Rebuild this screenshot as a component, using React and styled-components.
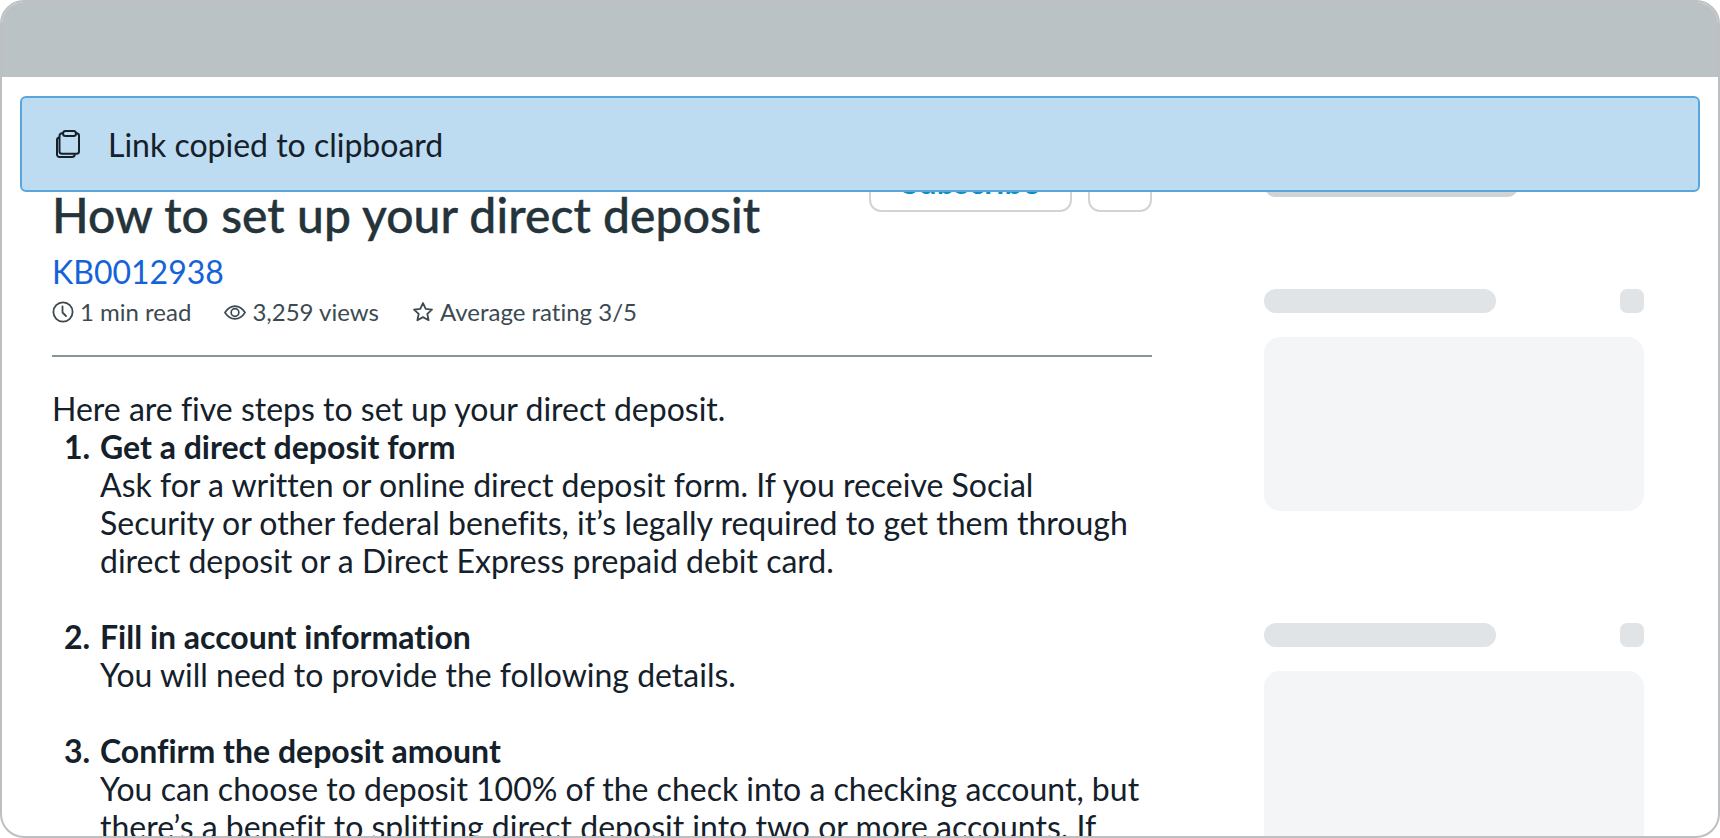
import styled, { createGlobalStyle } from "styled-components";

const GlobalStyle = createGlobalStyle`
  html, body {
    margin: 0;
    padding: 0;
    background: #fff;
  }
  * {
    box-sizing: border-box;
  }
  body {
    font-family: Lato, "Open Sans", sans-serif;
    font-variant-ligatures: none;
  }
`;

const CopyIcon = () => (
  <svg width="24" height="28" viewBox="0 0 24 28" fill="none" stroke="#14202a" strokeWidth="2" strokeLinejoin="round">
    <path d="M7 3.2H6a2.500 2.500 0 0 0-2.500 2.500v15.600a2.500 2.500 0 0 0 2.500 2.500h14.500a2.500 2.500 0 0 0 2.500-2.500V5.700a2.500 2.500 0 0 0-2.500-2.500H20" />
    <rect x="7" y="1" width="13" height="5" rx="2.500" />
    <path d="M3.500 7.500a2.500 2.500 0 0 0-2.500 2.500v14.500a2.500 2.500 0 0 0 2.500 2.500H16a2.800 2.800 0 0 0 2.800-2.800" />
  </svg>
);

const ClockIcon = () => (
  <svg width="22" height="22" viewBox="0 0 22 22" fill="none" stroke="#3b4a52" strokeWidth="1.800" strokeLinecap="round" strokeLinejoin="round">
    <circle cx="11" cy="11" r="9.600" />
    <path d="M10.500 5.500v6l3.500 3.500" />
  </svg>
);

const EyeIcon = () => (
  <svg width="22" height="17" viewBox="0 0 24 18" fill="none" stroke="#3b4a52" strokeWidth="1.800" strokeLinejoin="round">
    <path d="M1 9c3-4.600 6.800-7 11-7s8 2.400 11 7c-3 4.600-6.800 7-11 7S4 13.600 1 9z" />
    <circle cx="12" cy="9" r="4.200" />
  </svg>
);

const StarIcon = () => (
  <svg width="22" height="22" viewBox="0 0 22 22" fill="none" stroke="#3b4a52" strokeWidth="1.800" strokeLinejoin="round">
    <path d="M11 2l2.700 5.900 6.300.7-4.700 4.300 1.300 6.300L11 16.100l-5.600 3.100 1.300-6.300L2 8.600l6.300-.7z" />
  </svg>
);

const Frame = styled.div`
  position: relative;
  width: 1720px;
  height: 838px;
  overflow: hidden;
  background: #fff;
  border: 2px solid #bdbfc0;
  border-radius: 24px;
`;

const TopBar = styled.div`
  height: 75px;
  background: #bac2c5;
`;

const Toast = styled.div`
  position: absolute;
  top: 94px;
  left: 18px;
  width: 1680px;
  height: 96px;
  display: flex;
  align-items: center;
  gap: 28px;
  padding-left: 34px;
  background: #bddbf1;
  border: 2px solid #57a7de;
  border-radius: 6px;
  font-size: 32px;
  color: #14202a;
`;

const Layout = styled.div`
  display: grid;
  grid-template-columns: 1100px 380px;
  column-gap: 112px;
  padding: 0 0 0 50px;
`;

const Article = styled.div`
  padding-top: 79px;
`;

const Actions = styled.div`
  display: flex;
  justify-content: flex-end;
  gap: 16px;
  height: 56px;
  margin-bottom: -25px;
`;

const ActionButton = styled.div`
  width: ${(props) => props.$width}px;
  display: flex;
  justify-content: center;
  align-items: center;
  padding-bottom: 6px;
  border: 2px solid #d0d4d6;
  border-radius: 12px;
  background: #fff;
  font-size: 32px;
  font-weight: 700;
  color: #0a8fc4;
`;

const Title = styled.h1`
  margin: 0;
  font-size: 48px;
  font-weight: 500;
  letter-spacing: 0.07px;
  line-height: 56px;
  color: #25333a;
  -webkit-text-stroke: 0.4px #25333a;
`;

const KbLink = styled.a`
  display: block;
  margin-top: 10px;
  font-size: 32px;
  line-height: 38px;
  color: #1463d8;
`;

const MetaRow = styled.div`
  display: flex;
  gap: 33px;
  margin-top: 4px;
  font-size: 24px;
  line-height: 34px;
  color: #3b4a52;
`;

const MetaItem = styled.span`
  display: flex;
  align-items: center;
  gap: 6px;
`;

const Rule = styled.hr`
  margin: 26px 0 0;
  border: 0;
  border-top: 2px solid #8a9599;
`;

const Body = styled.div`
  margin-top: 33px;
  font-size: 32px;
  line-height: 38px;
  color: #14202a;
`;

const Steps = styled.ol`
  margin: 0;
  padding-left: 48px;
`;

const Step = styled.li`
  margin-bottom: 38px;
  &::marker {
    content: counter(list-item) ". \\200A";
    font-weight: 700;
  }
`;

const StepTitle = styled.div`
  font-weight: 700;
`;

const Sidebar = styled.div`
  padding-top: 40px;
`;

const TopPill = styled.div`
  width: 255px;
  height: 80px;
  margin-bottom: 92px;
  border-radius: 0 0 12px 12px;
  background: #d0d4d6;
`;

const SkeletonGroup = styled.div`
  margin-bottom: 112px;
`;

const SkeletonHead = styled.div`
  display: flex;
  justify-content: space-between;
  margin-bottom: 24px;
`;

const SkeletonLine = styled.div`
  width: 232px;
  height: 24px;
  border-radius: 12px;
  background: #e1e4e7;
`;

const SkeletonDot = styled.div`
  width: 24px;
  height: 24px;
  border-radius: 7px;
  background: #e1e4e7;
`;

const SkeletonBlock = styled.div`
  height: ${(props) => props.$height}px;
  border-radius: 16px;
  background: #f4f5f7;
`;

const App = () => {
  return (
    <>
      <GlobalStyle />
      <Frame>
        <TopBar />
        <Layout>
          <Article>
            <Actions>
              <ActionButton $width={203}>Subscribe</ActionButton>
              <ActionButton $width={64} />
            </Actions>
            <Title>How to set up your direct deposit</Title>
            <KbLink>KB0012938</KbLink>
            <MetaRow>
              <MetaItem>
                <ClockIcon />1 min read
              </MetaItem>
              <MetaItem>
                <EyeIcon />3,259 views
              </MetaItem>
              <MetaItem>
                <StarIcon />Average rating 3/5
              </MetaItem>
            </MetaRow>
            <Rule />
            <Body>
              Here are five steps to set up your direct deposit.
              <Steps>
                <Step>
                  <StepTitle>Get a direct deposit form</StepTitle>
                  Ask for a written or online direct deposit form. If you receive Social Security or other federal benefits, it’s legally required to get them through direct deposit or a Direct Express prepaid debit card.
                </Step>
                <Step>
                  <StepTitle>Fill in account information</StepTitle>
                  You will need to provide the following details.
                </Step>
                <Step>
                  <StepTitle>Confirm the deposit amount</StepTitle>
                  You can choose to deposit 100% of the check into a checking account, but there’s a benefit to splitting direct deposit into two or more accounts. If
                </Step>
              </Steps>
            </Body>
          </Article>
          <Sidebar>
            <TopPill />
            <SkeletonGroup>
              <SkeletonHead>
                <SkeletonLine />
                <SkeletonDot />
              </SkeletonHead>
              <SkeletonBlock $height={174} />
            </SkeletonGroup>
            <SkeletonGroup>
              <SkeletonHead>
                <SkeletonLine />
                <SkeletonDot />
              </SkeletonHead>
              <SkeletonBlock $height={300} />
            </SkeletonGroup>
          </Sidebar>
        </Layout>
        <Toast>
          <CopyIcon />
          Link copied to clipboard
        </Toast>
      </Frame>
    </>
  );
};

export default App;
